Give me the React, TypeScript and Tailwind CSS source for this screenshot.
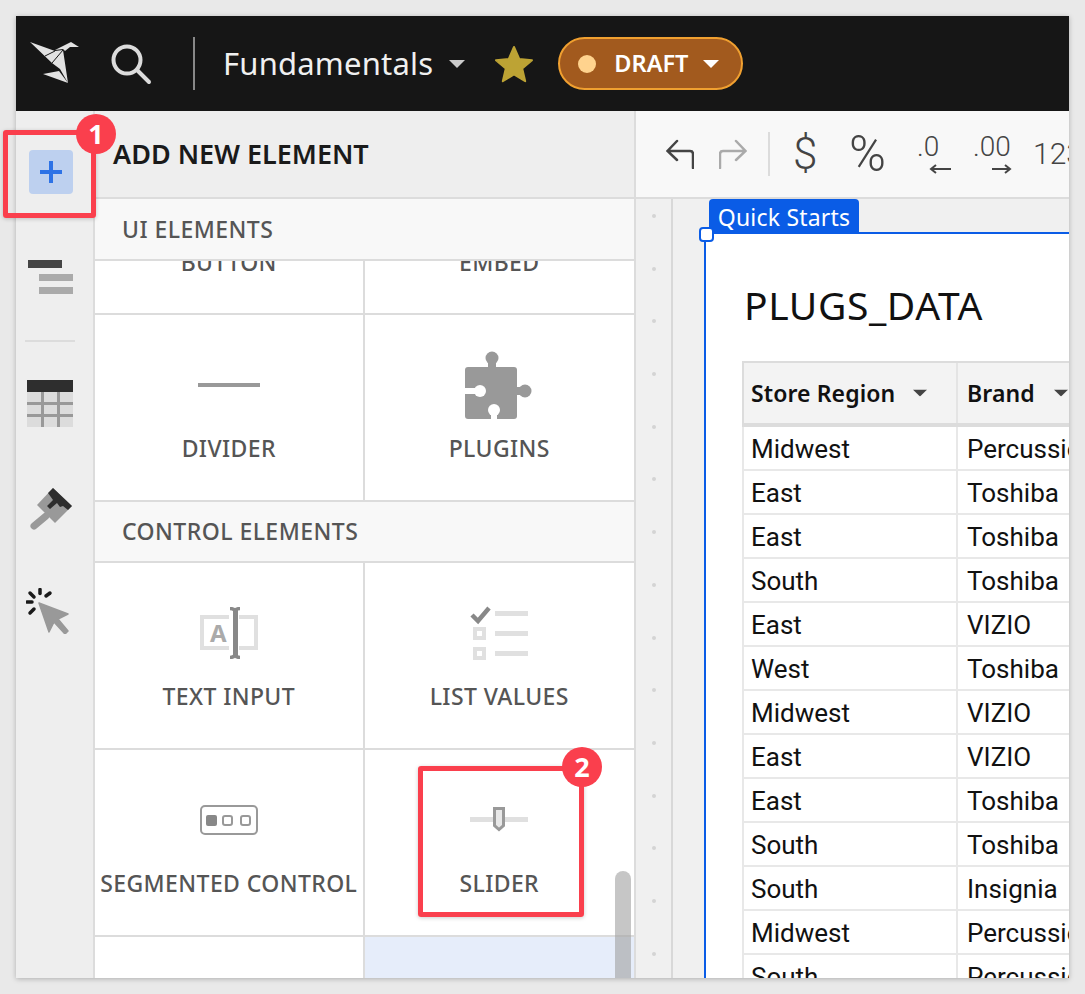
const rows = [
  ["Midwest", "Percussion"],
  ["East", "Toshiba"],
  ["East", "Toshiba"],
  ["South", "Toshiba"],
  ["East", "VIZIO"],
  ["West", "Toshiba"],
  ["Midwest", "VIZIO"],
  ["East", "VIZIO"],
  ["East", "Toshiba"],
  ["South", "Toshiba"],
  ["South", "Insignia"],
  ["Midwest", "Percussion"],
  ["South", "Percussion"],
];

function Caret({ className }: { className: string }) {
  return (
    <svg width="16" height="8" viewBox="0 0 16 8" className={className}>
      <path d="M0 0h16L8 8z" fill="currentColor" />
    </svg>
  );
}

function Logo() {
  return (
    <svg width="50" height="43" viewBox="0 0 50 43" fill="#e2e2e2">
      <path d="M0 0L25 9 33 8 38 41 30 27 22 21z" />
      <path d="M25 8L41 0 49 5 40 5 35 9 33 7z" />
      <path d="M13 32L29 29 38 41z" />
      <path d="M15 14L25 9 M22 21L33 8" stroke="#161616" strokeWidth="1" fill="none" />
    </svg>
  );
}

function SearchIcon() {
  return (
    <svg width="42" height="42" viewBox="0 0 42 42" fill="none" stroke="#dcdcdc" strokeWidth="4" strokeLinecap="round">
      <circle cx="17" cy="17" r="13.5" />
      <path d="M27 27l12 12" />
    </svg>
  );
}

function Star() {
  return (
    <svg width="40" height="40" viewBox="0 0 40 40">
      <path d="M20 3l5.2 12 12.8 1.2-9.8 8.4 3 12.6L20 30.4 8.8 37.2l3-12.6L2 16.200l12.800-1.200z" fill="#bda334" stroke="#bda334" strokeWidth="2" strokeLinejoin="round" />
    </svg>
  );
}

function IndentIcon() {
  return (
    <svg width="46" height="34" viewBox="0 0 46 34">
      <rect x="0" y="0" width="34" height="8" fill="#444" />
      <rect x="11" y="14" width="34" height="7" fill="#aaa" />
      <rect x="11" y="27" width="34" height="7" fill="#aaa" />
    </svg>
  );
}

function TableIcon() {
  return (
    <svg width="46" height="47" viewBox="0 0 46 47">
      <rect x="0" y="12" width="46" height="35" fill="#dcdcdc" />
      <rect x="0" y="0" width="46" height="12" fill="#2e2e2e" />
      <rect x="14" y="12" width="3" height="35" fill="#999" />
      <rect x="30" y="12" width="3" height="35" fill="#999" />
      <rect x="0" y="22" width="46" height="3" fill="#999" />
      <rect x="0" y="34" width="46" height="3" fill="#999" />
    </svg>
  );
}

function BrushIcon() {
  return (
    <svg width="42" height="42" viewBox="0 0 42 42">
      <path d="M23 0L42 18 25 35 7 17z" fill="#999" />
      <path d="M16 28L4 38" stroke="#999" strokeWidth="7" strokeLinecap="round" />
      <path d="M23 0L42 18 38 22 33 18 30 19 27 15 20 21 17 18 23 12 18 5z" fill="#2e2e2e" />
    </svg>
  );
}

function CursorIcon() {
  return (
    <svg width="46" height="46" viewBox="0 0 46 46">
      <g stroke="#1a1a1a" strokeWidth="3.5" strokeLinecap="round">
        <path d="M14 1.500v4" />
        <path d="M4 5l4 4" />
        <path d="M24 5l-4 3" />
        <path d="M1 14h5" />
        <path d="M4 25l4-4" />
      </g>
      <path d="M13 15l29 11-10 5 10 12-3 3-11-12-5 10z" fill="#999" stroke="#999" strokeWidth="1.500" strokeLinejoin="round" />
    </svg>
  );
}

function PuzzleIcon() {
  return (
    <svg width="68" height="68" viewBox="0 0 68 68">
      <rect x="0" y="16" width="52" height="52" rx="3" fill="#999" />
      <circle cx="27" cy="7" r="6.500" fill="#999" />
      <rect x="23" y="10" width="8" height="8" fill="#999" />
      <circle cx="60" cy="40" r="6.500" fill="#999" />
      <rect x="50" y="36" width="6" height="8" fill="#999" />
      <circle cx="15" cy="40" r="6" fill="#fff" />
      <rect x="0" y="37" width="12" height="6" fill="#fff" />
      <circle cx="29" cy="59" r="6" fill="#fff" />
      <rect x="26" y="60" width="6" height="8" fill="#fff" />
    </svg>
  );
}

function TextInputIcon() {
  return (
    <svg width="58" height="52" viewBox="0 0 58 52">
      <path d="M29 10H2v31h27M39 10h17v31H39" fill="none" stroke="#e0e0e0" strokeWidth="4" />
      <text x="10" y="35" fontFamily="Noto Sans" fontWeight="700" fontSize="24" fill="#aaa">A</text>
      <path d="M30 1.500c2 0 3.500.5 5 2 1.500-1.500 3-2 5-2M30 50.500c2 0 3.500-.5 5-2 1.500 1.500 3 2 5 2" fill="none" stroke="#888" strokeWidth="3.500" />
      <rect x="33" y="3" width="5" height="46" fill="#888" />
    </svg>
  );
}

function ListValuesIcon() {
  return (
    <svg width="58" height="56" viewBox="0 0 58 56">
      <path d="M2 10l6 6L19 3" fill="none" stroke="#888" strokeWidth="4.500" />
      <rect x="25" y="6" width="33" height="5" fill="#e0e0e0" />
      <rect x="25" y="26" width="33" height="5" fill="#e0e0e0" />
      <rect x="25" y="46" width="33" height="5" fill="#e0e0e0" />
      <rect x="5" y="24" width="9" height="9" fill="none" stroke="#e0e0e0" strokeWidth="4" />
      <rect x="5" y="44" width="9" height="9" fill="none" stroke="#e0e0e0" strokeWidth="4" />
    </svg>
  );
}

function SegmentedIcon() {
  return (
    <svg width="58" height="30" viewBox="0 0 58 30" fill="none" stroke="#999" strokeWidth="2">
      <rect x="1" y="1" width="56" height="28" rx="4" />
      <rect x="6" y="10" width="11" height="11" rx="2" fill="#888" stroke="none" />
      <rect x="23" y="11" width="9" height="9" rx="2" />
      <rect x="41" y="11" width="9" height="9" rx="2" />
    </svg>
  );
}

function SliderIcon() {
  return (
    <svg width="58" height="26" viewBox="0 0 58 26">
      <rect x="0" y="10" width="58" height="5" fill="#e0e0e0" />
      <path d="M24.500 1.500h9v17l-4.500 4-4.500-4z" fill="#e8e8e8" stroke="#999" strokeWidth="3" />
    </svg>
  );
}

function ElementCell({ label, icon, className = "" }: { label: string; icon: React.ReactNode; className?: string }) {
  return (
    <div className={`flex h-[187px] flex-col items-center border-b-2 border-[#dcdcdc] bg-white pt-[35px] ${className}`}>
      <div className="flex h-[70px] items-center justify-center">{icon}</div>
      <div className="mt-[11px] text-[23px] leading-[34px] font-medium tracking-[0.4px] whitespace-nowrap text-[#555]">{label}</div>
    </div>
  );
}

function SectionTitle({ children, className }: { children: React.ReactNode; className: string }) {
  return (
    <div className={`flex shrink-0 items-center border-b-2 border-[#dcdcdc] bg-[#f8f8f8] pl-[27px] text-[23px] font-medium tracking-[0.45px] text-[#555] ${className}`}>
      {children}
    </div>
  );
}

function ElementsPanel() {
  return (
    <div className="relative flex w-[541px] shrink-0 flex-col border-r-2 border-[#dcdcdc]">
      <div className="flex h-[88px] shrink-0 items-center border-b-2 border-[#dcdcdc] bg-[#eeeeee] pl-[18px] text-[27px] font-semibold text-[#1a1a1a]">
        ADD NEW ELEMENT
      </div>
      <SectionTitle className="h-[62px]">UI ELEMENTS</SectionTitle>
      <div className="grid h-[54px] shrink-0 grid-cols-2 overflow-hidden border-b-2 border-[#dcdcdc] bg-white text-[23px] leading-[34px] font-medium tracking-[0.4px] text-[#555]">
        <div className="flex h-[52px] items-end justify-center border-r-2 border-[#dcdcdc] pb-[34px]">BUTTON</div>
        <div className="flex h-[52px] items-end justify-center pb-[34px]">EMBED</div>
      </div>
      <div className="grid shrink-0 grid-cols-2">
        <ElementCell label="DIVIDER" icon={<div className="h-1 w-[62px] bg-[#999]" />} className="border-r-2" />
        <ElementCell label="PLUGINS" icon={<PuzzleIcon />} />
      </div>
      <SectionTitle className="h-[61px]">CONTROL ELEMENTS</SectionTitle>
      <div className="grid shrink-0 grid-cols-2">
        <ElementCell label="TEXT INPUT" icon={<TextInputIcon />} className="border-r-2" />
        <ElementCell label="LIST VALUES" icon={<ListValuesIcon />} />
        <ElementCell label="SEGMENTED CONTROL" icon={<SegmentedIcon />} className="border-r-2" />
        <ElementCell label="SLIDER" icon={<SliderIcon />} />
      </div>
      <div className="grid min-h-0 flex-1 grid-cols-2">
        <div className="border-r-2 border-[#dcdcdc] bg-white" />
        <div className="bg-[#e6edfa]" />
      </div>
      {/* scrollbar thumb */}
      <div className="absolute right-[3px] bottom-0 h-[107px] w-4 rounded-t-lg bg-[#a0a0a0]/60" />
    </div>
  );
}

function Toolbar() {
  return (
    <div className="flex h-[88px] shrink-0 items-center overflow-hidden border-b-2 border-[#dcdcdc] bg-[#f8f8f8] pl-[30px] font-['Roboto'] text-[#444]">
      <svg width="28" height="30" viewBox="0 0 28 30" fill="none" stroke="#444" strokeWidth="2.500" strokeLinecap="round" className="shrink-0">
        <path d="M27 29V15c0-2-1-3-3-3H2M11 2L1.500 12l9.500 9" />
      </svg>
      <svg width="28" height="30" viewBox="0 0 28 30" fill="none" stroke="#aaa" strokeWidth="2.500" strokeLinecap="round" className="ml-[25px] shrink-0">
        <path d="M1 29V15c0-2 1-3 3-3h22M17 2l9.500 10L17 21" />
      </svg>
      <div className="ml-[21px] h-[44px] w-0.5 shrink-0 bg-[#dcdcdc]" />
      <span className="ml-[23px] w-6 shrink-0 text-center text-[44px] leading-none font-light">$</span>
      <span className="ml-[32px] w-9 shrink-0 text-center text-[50px] leading-none font-light">%</span>
      <div className="relative ml-[32px] h-10 w-[34px] shrink-0 text-[28px] leading-none font-light">
        <span className="absolute -top-[1px] left-0">.0</span>
        <svg width="22" height="10" viewBox="0 0 22 10" className="absolute right-0 bottom-0" fill="none" stroke="#444" strokeWidth="2">
          <path d="M22 5H2M7 1L2 5l5 4" />
        </svg>
      </div>
      <div className="relative ml-[22px] h-10 w-[39px] shrink-0 text-[28px] leading-none font-light">
        <span className="absolute -top-[1px] left-0">.00</span>
        <svg width="20" height="10" viewBox="0 0 20 10" className="absolute right-0 bottom-0" fill="none" stroke="#444" strokeWidth="2">
          <path d="M0 5h18M13 1l5 4-5 4" />
        </svg>
      </div>
      <span className="ml-[21px] shrink-0 text-[30px] leading-none font-light whitespace-nowrap">123</span>
    </div>
  );
}

function DataTable() {
  return (
    <div className="mt-[24px] ml-[36px] w-[400px]">
      <div className="flex h-[66px] border-y-2 border-b-4 border-l-2 border-[#dcdcdc] bg-[#f3f3f3] text-[23px] font-semibold tracking-[0.1px] text-[#111]">
        <div className="flex w-[214px] shrink-0 items-center border-r-2 border-[#e4e4e4] pl-[7px]">
          Store Region
          <Caret className="ml-[17px] scale-90 text-[#444]" />
        </div>
        <div className="flex flex-1 items-center pl-[9px]">
          Brand
          <Caret className="ml-[18px] scale-90 text-[#444]" />
        </div>
      </div>
      {rows.map(([region, brand], i) => (
        <div key={i} className="flex h-[44px] border-b-2 border-l-2 border-[#e8e8e8] font-['Roboto'] text-[26px] leading-[44px] text-[#111]">
          <div className="w-[214px] shrink-0 border-r-2 border-[#e8e8e8] pl-[7px]">{region}</div>
          <div className="flex-1 pl-[9px] whitespace-nowrap">{brand}</div>
        </div>
      ))}
    </div>
  );
}

function Canvas() {
  return (
    <div className="flex min-h-0 flex-1 overflow-hidden bg-[#f0f0f0]">
      <div className="flex w-[37px] shrink-0 flex-col items-center gap-[48.700px] border-r-2 border-[#d8d8d8] pt-[15px]">
        {Array.from({ length: 15 }, (_, i) => (
          <div key={i} className="size-1 shrink-0 rounded-full bg-[#d4d4d4]" />
        ))}
      </div>
      <div className="relative ml-[31px] flex-1 pt-[33px]">
        <div className="absolute top-0 left-[5px] flex h-[35px] w-[150px] items-center justify-center rounded-t bg-[#0a5ce6] pt-px text-[23px] tracking-[0.2px] text-white">
          Quick Starts
        </div>
        <div className="h-full border-t-2 border-l-2 border-[#0a5ce6] bg-white">
          <div className="pt-[39px] pl-[38px] text-[39px] leading-[64px] tracking-[0.6px] text-[#111]">PLUGS_DATA</div>
          <DataTable />
        </div>
        {/* corner handle */}
        <div className="absolute top-[28px] -left-[5px] size-[15px] rounded-[4px] border-2 border-[#0a5ce6] bg-white" />
      </div>
    </div>
  );
}

function Rail() {
  return (
    <div className="flex w-[79px] shrink-0 flex-col items-start border-r-2 border-[#dcdcdc] bg-[#eeeeee] pt-[39px]">
      <div className="ml-[13px] flex size-11 items-center justify-center rounded bg-[#bdd0ef]">
        <svg width="24" height="24" viewBox="0 0 24 24" stroke="#2d72e6" strokeWidth="4">
          <path d="M12 1v22M1 12h22" />
        </svg>
      </div>
      <div className="mt-[66px] ml-3"><IndentIcon /></div>
      <div className="mt-[46px] ml-[9px] h-0.5 w-[50px] bg-[#dcdcdc]" />
      <div className="mt-[38px] ml-[11px]"><TableIcon /></div>
      <div className="mt-[61px] ml-[14px]"><BrushIcon /></div>
      <div className="mt-[58px] ml-[10px]"><CursorIcon /></div>
    </div>
  );
}

function Callout({ n, className, badgeClass }: { n: number; className: string; badgeClass: string }) {
  return (
    <div className={`absolute rounded-[3px] border-[5px] border-[#fa3f4d] shadow-[0_1px_4px_rgba(0,0,0,0.2)] ${className}`}>
      <div className={`absolute flex size-10 items-center justify-center rounded-full bg-[#fa3f4d] text-[27px] font-bold text-white ${badgeClass}`}>
        {n}
      </div>
    </div>
  );
}

export default function App() {
  return (
    <div className="relative h-[994px] w-[1085px] overflow-hidden bg-[#e9e9e9] pt-4 pl-4 font-['Noto_Sans',sans-serif]">
      <div className="flex h-[962px] w-[1053px] flex-col overflow-hidden bg-white shadow-[0_1px_5px_rgba(0,0,0,0.25)]">
        <header className="flex h-[95px] shrink-0 items-center bg-[#161616] pl-[14px]">
          <Logo />
          <div className="ml-[30px]"><SearchIcon /></div>
          <div className="ml-[41px] h-[53px] w-0.5 bg-[#888]" />
          <span className="ml-[28px] text-[31px] tracking-[0.2px] text-[#f0f0f0]">Fundamentals</span>
          <Caret className="ml-[16px] text-[#cccccc]" />
          <div className="ml-[29px]"><Star /></div>
          <div className="ml-6 flex h-[53px] w-[185px] items-center rounded-full border-2 border-[#f0a030] bg-[#a25a1e] pl-[18px]">
            <div className="size-[18px] rounded-full bg-[#ffd38e]" />
            <span className="ml-[18px] text-[23.500px] font-semibold text-white">DRAFT</span>
            <Caret className="ml-[15px] text-white" />
          </div>
        </header>
        <div className="flex min-h-0 flex-1">
          <Rail />
          <ElementsPanel />
          <div className="flex min-w-0 flex-1 flex-col">
            <Toolbar />
            <Canvas />
          </div>
        </div>
      </div>
      <Callout n={1} className="top-[130px] left-[3px] h-[88px] w-[93px]" badgeClass="-top-[21px] -right-[25px]" />
      <Callout n={2} className="top-[766px] left-[418px] h-[151px] w-[166px]" badgeClass="-top-[24px] -right-[23px]" />
    </div>
  );
}
